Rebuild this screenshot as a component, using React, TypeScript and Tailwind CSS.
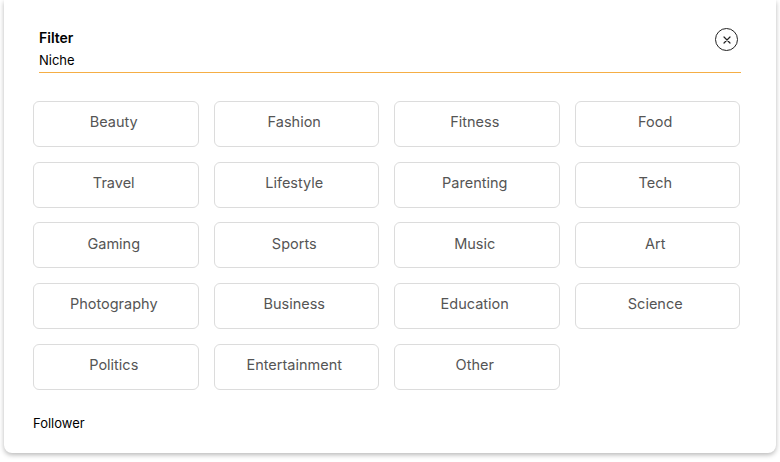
const niches = [
  'Beauty', 'Fashion', 'Fitness', 'Food',
  'Travel', 'Lifestyle', 'Parenting', 'Tech',
  'Gaming', 'Sports', 'Music', 'Art',
  'Photography', 'Business', 'Education', 'Science',
  'Politics', 'Entertainment', 'Other',
];

export default function App() {
  return (
    <div className="w-[780px] h-[462px] bg-white overflow-hidden" style={{ fontFamily: 'Inter, "Noto Sans", sans-serif' }}>
      <div className="ml-[4px] w-[772px] bg-white rounded-b-lg shadow-[0_2px_5px_rgba(0,0,0,0.28)] pt-[28px] pb-[21px]">
        <div className="ml-[35px] w-[702px] border-b border-[#f5ae45] pb-[3px] relative">
          <div className="text-[14px] leading-[20px] font-semibold text-black">Filter</div>
          <div className="text-[13px] leading-[18px] text-black mt-[3px]">Niche</div>
          <button className="absolute right-[3px] top-0 w-[23px] h-[23px] rounded-full border border-[#222] flex items-center justify-center">
            <svg width="8" height="8" viewBox="0 0 8 8" stroke="#222" strokeWidth="1.2" strokeLinecap="round">
              <path d="M1 1L7 7M7 1L1 7" />
            </svg>
          </button>
        </div>
        <div className="ml-[29px] w-[707px] mt-[28px] grid grid-cols-4 gap-x-[15px] gap-y-[14.7px]">
          {niches.map((n) => (
            <div key={n} className="h-[46px] pb-[4px] pr-[4px] rounded-md border border-[#dcdcdc] flex items-center justify-center text-[14.5px] text-[#555]">
              {n}
            </div>
          ))}
        </div>
        <div className="ml-[29px] mt-[24px] text-[13px] leading-[18px] text-black">Follower</div>
      </div>
    </div>
  );
}
